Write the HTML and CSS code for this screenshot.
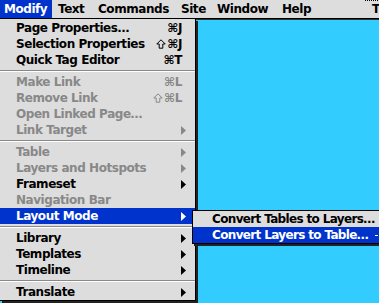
FILE: index.html
```html
<!DOCTYPE html>
<html>
<head>
<meta charset="utf-8">
<link rel="stylesheet" href="styles.css">
</head>
<body>
<div class="screen">
  <div class="menubar">
    <span class="mb-item first active">Modify</span>
    <span class="mb-item second">Text</span>
    <span class="mb-item">Commands</span>
    <span class="mb-item">Site</span>
    <span class="mb-item">Window</span>
    <span class="mb-item">Help</span>
    <span class="mb-item dotted">T</span>
  </div>
  <div class="desk"></div>

  <div class="menu main">
    <div class="row"><span class="label">Page Properties…</span><span class="key">⌘J</span></div>
    <div class="row"><span class="label">Selection Properties</span><span class="key"><svg class="shift" viewBox="0 0 10 10"><path d="M5 0.8L9.2 5H6.8V9.2H3.2V5H0.8Z"/></svg>⌘J</span></div>
    <div class="row"><span class="label">Quick Tag Editor</span><span class="key">⌘T</span></div>
    <div class="sep"></div>
    <div class="row off"><span class="label">Make Link</span><span class="key">⌘L</span></div>
    <div class="row off"><span class="label">Remove Link</span><span class="key"><svg class="shift" viewBox="0 0 10 10"><path d="M5 0.8L9.2 5H6.8V9.2H3.2V5H0.8Z"/></svg>⌘L</span></div>
    <div class="row off"><span class="label">Open Linked Page…</span></div>
    <div class="row off"><span class="label">Link Target</span><svg class="arrow" viewBox="0 0 5 9"><path d="M0 0L5 4.5L0 9Z"/></svg></div>
    <div class="sep"></div>
    <div class="row off"><span class="label">Table</span><svg class="arrow" viewBox="0 0 5 9"><path d="M0 0L5 4.5L0 9Z"/></svg></div>
    <div class="row off"><span class="label">Layers and Hotspots</span><svg class="arrow" viewBox="0 0 5 9"><path d="M0 0L5 4.5L0 9Z"/></svg></div>
    <div class="row"><span class="label">Frameset</span><svg class="arrow" viewBox="0 0 5 9"><path d="M0 0L5 4.5L0 9Z"/></svg></div>
    <div class="row off"><span class="label">Navigation Bar</span></div>
    <div class="row hi"><span class="label">Layout Mode</span><svg class="arrow" viewBox="0 0 5 9"><path d="M0 0L5 4.5L0 9Z"/></svg></div>
    <div class="sep"></div>
    <div class="row"><span class="label">Library</span><svg class="arrow" viewBox="0 0 5 9"><path d="M0 0L5 4.5L0 9Z"/></svg></div>
    <div class="row"><span class="label">Templates</span><svg class="arrow" viewBox="0 0 5 9"><path d="M0 0L5 4.5L0 9Z"/></svg></div>
    <div class="row"><span class="label">Timeline</span><svg class="arrow" viewBox="0 0 5 9"><path d="M0 0L5 4.5L0 9Z"/></svg></div>
    <div class="sep"></div>
    <div class="row"><span class="label">Translate</span><svg class="arrow" viewBox="0 0 5 9"><path d="M0 0L5 4.5L0 9Z"/></svg></div>
  </div>

  <div class="menu sub">
    <div class="row"><span class="label">Convert Tables to Layers…</span></div>
    <div class="row hi"><span class="label">Convert Layers to Table…</span><span class="dash"></span></div>
  </div>
</div>
</body>
</html>
```
FILE: styles.css
```css
html, body {
  margin: 0;
  padding: 0;
}
body {
  width: 379px;
  height: 303px;
  overflow: hidden;
  background: #33ccff;
  font-family: "DejaVu Sans", "Verdana", sans-serif;
  font-weight: bold;
  font-size: 12px;
  letter-spacing: -0.45px;
  color: #000;
}
.screen {
  position: relative;
  width: 379px;
  height: 303px;
  overflow: hidden;
}
.menubar {
  display: grid;
  grid-template-columns: 52px 39px 83px 36px 65px 90px 1fr;
  height: 18px;
  line-height: 18px;
  background: #dddddd;
  border-bottom: 1px solid #000;
  white-space: nowrap;
}
.mb-item {
  padding-left: 7px;
}
.mb-item.first { padding-left: 4px; }
.mb-item.second { padding-left: 6px; }
.mb-item.active {
  background: #0033cc;
  color: #fff;
}
.mb-item.dotted {
  background: repeating-linear-gradient(90deg, #000 0 1px, transparent 1px 2px) top left / 100% 1px no-repeat;
}
.desk {
  height: 283px;
  border-top: 1px solid #333;
  background: #33ccff;
}
.menu {
  position: absolute;
  background: #dddddd;
  white-space: nowrap;
}
.main {
  left: 0;
  top: 19px;
  width: 195px;
  padding-top: 1px;
  border-right: 1px solid #000;
  border-bottom: 1px solid #000;
  box-shadow: 2px 2px 0 #222;
}
.row {
  display: flex;
  align-items: center;
  height: 16px;
  line-height: 16px;
  padding: 0 9px 0 16px;
}
.row .key {
  display: flex;
  align-items: center;
  margin-left: auto;
  margin-right: 4px;
}
.shift {
  width: 10px;
  height: 10px;
  margin-right: 1px;
  fill: none;
  stroke: currentColor;
  stroke-width: 1;
}
.row .arrow {
  margin-left: auto;
  width: 5px;
  height: 9px;
  fill: #000;
}
.row.off {
  color: #888888;
}
.row.off .arrow {
  fill: #888888;
}
.row.hi {
  background: #0033cc;
  color: #fff;
}
.row.hi .arrow {
  fill: #fff;
}
.sep {
  height: 6px;
  display: flex;
  align-items: center;
}
.sep::before {
  content: "";
  flex: 1;
  height: 1px;
  background: #888888;
  border-bottom: 1px solid #ffffff;
}
.sub {
  left: 192px;
  top: 210px;
  width: 200px;
  border: 1px solid #000;
  box-shadow: 2px 2px 0 #222;
  letter-spacing: -0.65px;
}
.sub .row {
  padding-left: 19px;
}
.dash {
  margin-left: auto;
  margin-right: 6px;
  width: 3px;
  height: 1px;
  background: #fff;
}
```
